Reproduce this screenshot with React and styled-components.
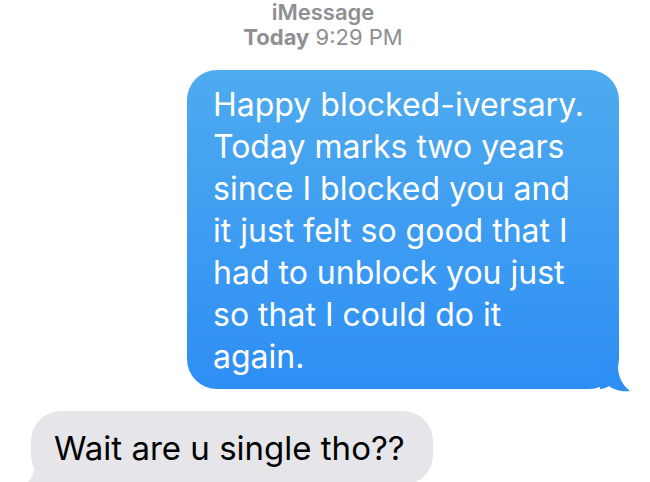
import styled, { createGlobalStyle } from "styled-components";

const GlobalStyle = createGlobalStyle`
  html, body {
    margin: 0;
    padding: 0;
    background: #fff;
  }
  body {
    font-family: Inter, "Liberation Sans", Arial, sans-serif;
    -webkit-font-smoothing: antialiased;
  }
`;

const Screen = styled.div`
  width: 650px;
  height: 482px;
  overflow: hidden;
  background: #fff;
  display: flex;
  flex-direction: column;
`;

const Header = styled.div`
  display: flex;
  flex-direction: column;
  align-items: center;
  color: #8e8e93;
  font-size: 22px;
  padding-right: 4px;

  .service {
    font-weight: 600;
    line-height: 24px;
  }
  .time {
    line-height: 26px;
  }
  .time strong {
    font-weight: 700;
  }
`;

const Row = styled.div`
  display: flex;
  justify-content: ${(p) => (p.$out ? "flex-end" : "flex-start")};
  padding: ${(p) => (p.$out ? "20px 31px 0 0" : "22px 0 0 31px")};
`;

const Bubble = styled.div`
  position: relative;
  font-size: ${(p) => (p.$out ? "32px" : "33px")};
  line-height: 42px;
  border-radius: 30px;
  padding: ${(p) => (p.$out ? "14px 20px 11px 26px" : "16px 28px 16px 23px")};
  width: ${(p) => (p.$out ? "432px" : "auto")};
  box-sizing: border-box;
  color: ${(p) => (p.$out ? "#fff" : "#000")};
  background: ${(p) =>
    p.$out ? "linear-gradient(180deg, #4eabef 0%, #2e8ef4 100%)" : "#e5e5ea"};

  span {
    display: block;
    white-space: nowrap;
  }
`;

const Tail = styled.svg`
  position: absolute;
  bottom: -3px;
  ${(p) => (p.$out ? "right: -11px;" : "left: -8px;")}
  width: 30px;
  height: 26px;
`;

const lines = [
  "Happy blocked-iversary.",
  "Today marks two years",
  "since I blocked you and",
  "it just felt so good that I",
  "had to unblock you just",
  "so that I could do it",
  "again.",
];

export default function App() {
  return (
    <>
      <GlobalStyle />
      <Screen>
        <Header>
          <div className="service">iMessage</div>
          <div className="time">
            <strong>Today</strong> 9:29 PM
          </div>
        </Header>
        <Row $out>
          <Bubble $out>
            {lines.map((l) => (
              <span key={l}>{l}</span>
            ))}
            <Tail $out viewBox="0 0 30 26">
              <path d="M0 0 L18 0 C18 10 22 19 30 25 C22 26 14 24 9 20 C6 22 3 23 0 23 Z" fill="#2e8ef4" />
            </Tail>
          </Bubble>
        </Row>
        <Row>
          <Bubble>
            <span>Wait are u single tho??</span>
            <Tail viewBox="0 0 30 26">
              <path d="M30 0 L12 0 C12 10 8 19 0 25 C8 26 16 24 21 20 C24 22 27 23 30 23 Z" fill="#e5e5ea" />
            </Tail>
          </Bubble>
        </Row>
      </Screen>
    </>
  );
}
